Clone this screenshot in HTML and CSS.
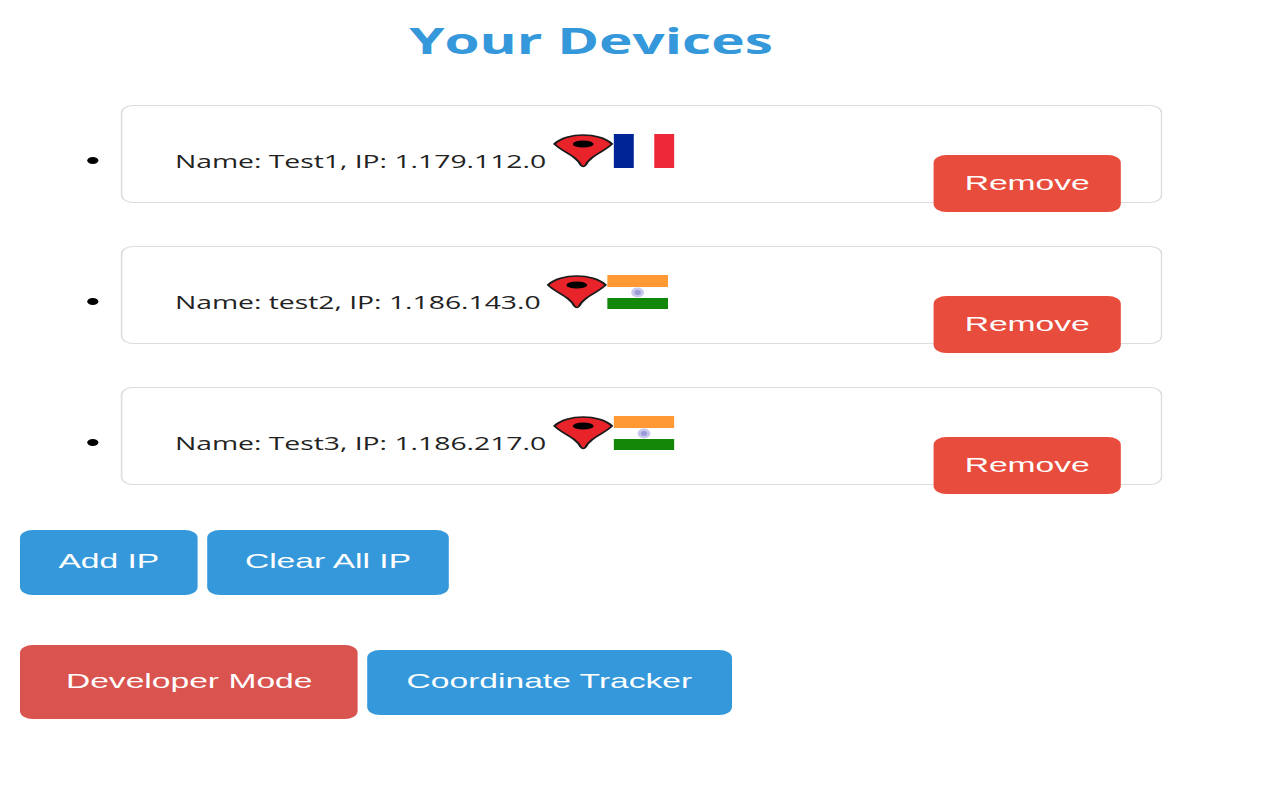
FILE: index.html
```html
<!DOCTYPE html>
<html lang="en">
<head>
    <meta charset="UTF-8">
    <title>Your Devices</title>
    <link rel="stylesheet" href="styles.css">
</head>
<body>
    <h1 class="title">Your Devices</h1>

    <ul class="device-list">
        <li class="device">
            <div class="device-card">
                <span class="device-info">Name: Test1, IP: 1.179.112.0
                    <svg class="pin" viewBox="0 0 38 34"><path d="M1 10C5 4 12 1 19 1C26 1 33 4 37 10C33 17 23 22 20.5 31Q19 34 17.5 31C15 22 5 17 1 10Z" fill="#e8232a" stroke="#1a1a1a" stroke-width="1.5"/><ellipse cx="19" cy="10" rx="6.5" ry="3.6" fill="#000"/></svg><svg class="flag" viewBox="0 0 38 34"><rect width="12.6" height="34" fill="#002395"/><rect x="25.4" width="12.6" height="34" fill="#ed2939"/></svg>
                </span>
                <button class="btn btn-remove">Remove</button>
            </div>
        </li>
        <li class="device">
            <div class="device-card">
                <span class="device-info">Name: test2, IP: 1.186.143.0
                    <svg class="pin" viewBox="0 0 38 34"><path d="M1 10C5 4 12 1 19 1C26 1 33 4 37 10C33 17 23 22 20.5 31Q19 34 17.5 31C15 22 5 17 1 10Z" fill="#e8232a" stroke="#1a1a1a" stroke-width="1.5"/><ellipse cx="19" cy="10" rx="6.5" ry="3.6" fill="#000"/></svg><svg class="flag" viewBox="0 0 38 34"><rect width="38" height="12" fill="#ff9933"/><rect y="23" width="38" height="11" fill="#138808"/><ellipse cx="19" cy="17.5" rx="4" ry="5" fill="#c8c8ec"/><ellipse cx="19" cy="17.5" rx="2" ry="2.5" fill="#9a9ad6"/></svg>
                </span>
                <button class="btn btn-remove">Remove</button>
            </div>
        </li>
        <li class="device">
            <div class="device-card">
                <span class="device-info">Name: Test3, IP: 1.186.217.0
                    <svg class="pin" viewBox="0 0 38 34"><path d="M1 10C5 4 12 1 19 1C26 1 33 4 37 10C33 17 23 22 20.5 31Q19 34 17.5 31C15 22 5 17 1 10Z" fill="#e8232a" stroke="#1a1a1a" stroke-width="1.5"/><ellipse cx="19" cy="10" rx="6.5" ry="3.6" fill="#000"/></svg><svg class="flag" viewBox="0 0 38 34"><rect width="38" height="12" fill="#ff9933"/><rect y="23" width="38" height="11" fill="#138808"/><ellipse cx="19" cy="17.5" rx="4" ry="5" fill="#c8c8ec"/><ellipse cx="19" cy="17.5" rx="2" ry="2.5" fill="#9a9ad6"/></svg>
                </span>
                <button class="btn btn-remove">Remove</button>
            </div>
        </li>
    </ul>

    <div class="actions actions-ip">
        <button class="btn btn-blue">Add IP</button>
        <button class="btn btn-blue">Clear All IP</button>
    </div>

    <div class="actions actions-tools">
        <button class="btn btn-dev">Developer Mode</button>
        <button class="btn btn-blue btn-tracker">Coordinate Tracker</button>
    </div>
</body>
</html>
```

FILE: styles.css
```css
html {
    overflow: hidden;
}
/* the whole page is stretched sideways, 800 wide drawn as 1280 */
body {
    width: 713.75px;
    height: 800px;
    margin: 0 0 0 20px;
    padding: 0;
    box-sizing: border-box;
    background-color: #fff;
    font-family: "Open Sans", sans-serif;
    color: #222;
    transform: scaleX(1.6);
    transform-origin: 0 0;
}
.title {
    margin: 0;
    padding-top: 18px;
    height: 105px;
    box-sizing: border-box;
    text-align: center;
    font-size: 35.4px;
    line-height: 44px;
    font-weight: bold;
    color: #3498db;
}
.device-list {
    list-style: disc;
    margin: 0;
    padding-left: 63.3px;
}
.device {
    margin-bottom: 43px;
    font-size: 20px;
}
.device::marker {
    color: #000;
}
.device-card {
    display: flex;
    justify-content: space-between;
    align-items: flex-start;
    height: 98px;
    box-sizing: border-box;
    padding: 28px 25px 0 32.5px;
    border: 1px solid #ddd;
    border-radius: 8px;
    background-color: #fff;
}
.device-info {
    font-size: 17.7px;
    line-height: 34px;
    white-space: nowrap;
}
.pin, .flag {
    width: 38px;
    height: 34px;
}
.pin {
    margin-left: -0.7px;
}
.btn {
    border: none;
    border-radius: 8px;
    color: #fff;
    font-family: "Liberation Sans", Arial, sans-serif;
    font-size: 21px;
    cursor: pointer;
    white-space: nowrap;
}
.btn-remove {
    width: 116.5px;
    height: 57px;
    margin-top: 21px;
    padding: 0 0 2px;
    background-color: #e74c3c;
}
.btn-blue {
    height: 65px;
    padding: 0 24px 3px;
    background-color: #3498db;
}
.btn-tracker {
    padding: 0 24.6px 3px;
}
.btn-dev {
    height: 74px;
    padding: 0 28.7px 3px;
    background-color: #d9534f;
}
.actions {
    display: flex;
    align-items: center;
    gap: 5.5px;
}
.actions-ip {
    margin-top: 45px;
}
.actions-tools {
    margin-top: 50px;
}
```
